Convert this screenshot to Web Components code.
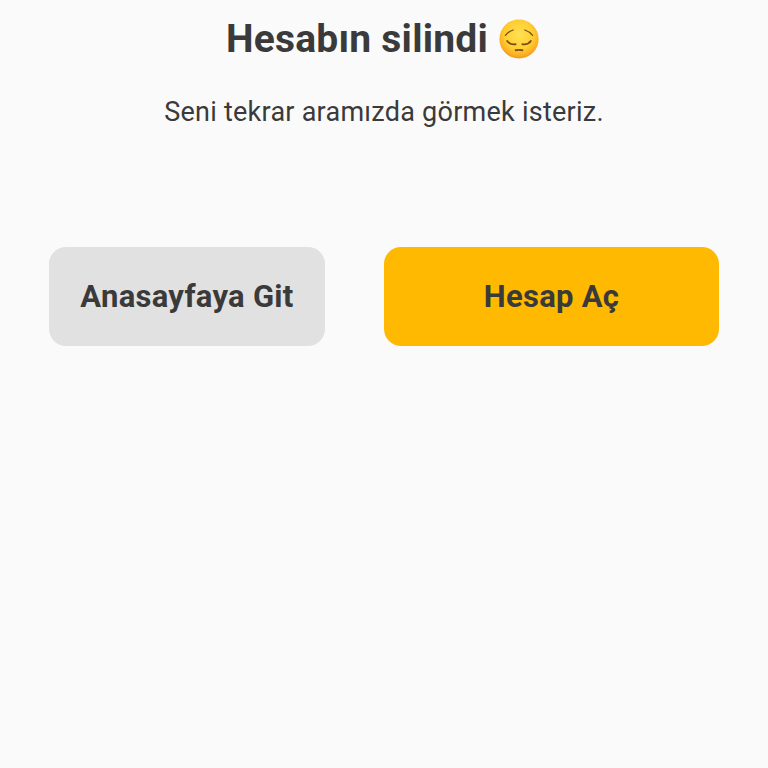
<!DOCTYPE html>
<html lang="tr">
<head>
<meta charset="utf-8">
<title>Hesabın silindi</title>
<style>
	html, body { margin: 0; height: 100%; background: #fafafa; }
	body { font-family: Roboto, "Noto Sans", sans-serif; color: #3a3a3a; }
</style>
</head>
<body>
<deleted-page>
	<span slot="title">Hesabın silindi</span>
	<span slot="message">Seni tekrar aramızda görmek isteriz.</span>
	<action-button slot="actions" style="width:276px">Anasayfaya Git</action-button>
	<action-button slot="actions" variant="primary" style="width:335px">Hesap Aç</action-button>
</deleted-page>

<script>
class PensiveEmoji extends HTMLElement {
	constructor() {
		super()
		this.attachShadow({ mode: 'open' })
		this.shadowRoot.innerHTML = `
			<style>
				:host { display: inline-flex; width: 40px; height: 40px; }
				svg { width: 100%; height: 100%; }
			</style>
			<svg viewBox="0 0 40 40" fill="none" aria-hidden="true">
				<defs>
					<radialGradient id="face" cx="50%" cy="40%" r="60%">
						<stop offset="0" stop-color="#ffe052"/>
						<stop offset="0.6" stop-color="#ffcf33"/>
						<stop offset="0.85" stop-color="#fcb022"/>
						<stop offset="1" stop-color="#f3951d"/>
					</radialGradient>
				</defs>
				<circle cx="20" cy="20" r="19.6" fill="url(#face)"/>
				<g stroke="#7c4d14" stroke-linecap="round">
					<path d="M6.4 16.4C8.2 14 10.8 12 14.2 11" stroke-width="1.3"/>
					<path d="M33.6 16.4C31.8 14 29.2 12 25.8 11" stroke-width="1.3"/>
					<path d="M8.2 22C10 24.6 13.2 25.8 16.6 25.2" stroke-width="1.9"/>
					<path d="M31.8 22C30 24.6 26.8 25.8 23.4 25.2" stroke-width="1.9"/>
					<path d="M16.6 31.2C18.8 30.8 21.2 30.8 23.4 31.2" stroke-width="1.9"/>
				</g>
			</svg>
		`
	}
}

class ActionButton extends HTMLElement {
	constructor() {
		super()
		this.attachShadow({ mode: 'open' })
		this.shadowRoot.innerHTML = `
			<style>
				:host {
					display: flex;
					align-items: center;
					justify-content: center;
					height: 99px;
					box-sizing: border-box;
					border-radius: 17px;
					background: #e1e1e1;
					color: #3a3a3a;
					font-size: 31px;
					letter-spacing: 0.28px;
					font-weight: 700;
				}
				:host([variant='primary']) {
					background: #ffb900;
				}
			</style>
			<slot></slot>
		`
	}
}

class DeletedPage extends HTMLElement {
	constructor() {
		super()
		this.attachShadow({ mode: 'open' })
		this.shadowRoot.innerHTML = `
			<style>
				:host {
					display: flex;
					flex-direction: column;
					align-items: center;
					padding-top: 16px;
				}
				.title {
					display: flex;
					align-items: center;
					gap: 11px;
					height: 46px;
					padding-right: 3px;
					font-size: 39px;
					letter-spacing: 0.22px;
					font-weight: 700;
					color: #3a3a3a;
				}
				.message {
					margin-top: 27px;
					height: 46px;
					line-height: 46px;
					font-size: 27px;
					letter-spacing: 0.25px;
					color: #3a3a3a;
				}
				.actions {
					display: flex;
					justify-content: space-between;
					box-sizing: border-box;
					width: 100%;
					margin-top: 112px;
					padding: 0 49px;
				}
			</style>
			<div class="title"><slot name="title"></slot><pensive-emoji></pensive-emoji></div>
			<div class="message"><slot name="message"></slot></div>
			<div class="actions"><slot name="actions"></slot></div>
		`
	}
}

customElements.define('pensive-emoji', PensiveEmoji)
customElements.define('action-button', ActionButton)
customElements.define('deleted-page', DeletedPage)
</script>
</body>
</html>
